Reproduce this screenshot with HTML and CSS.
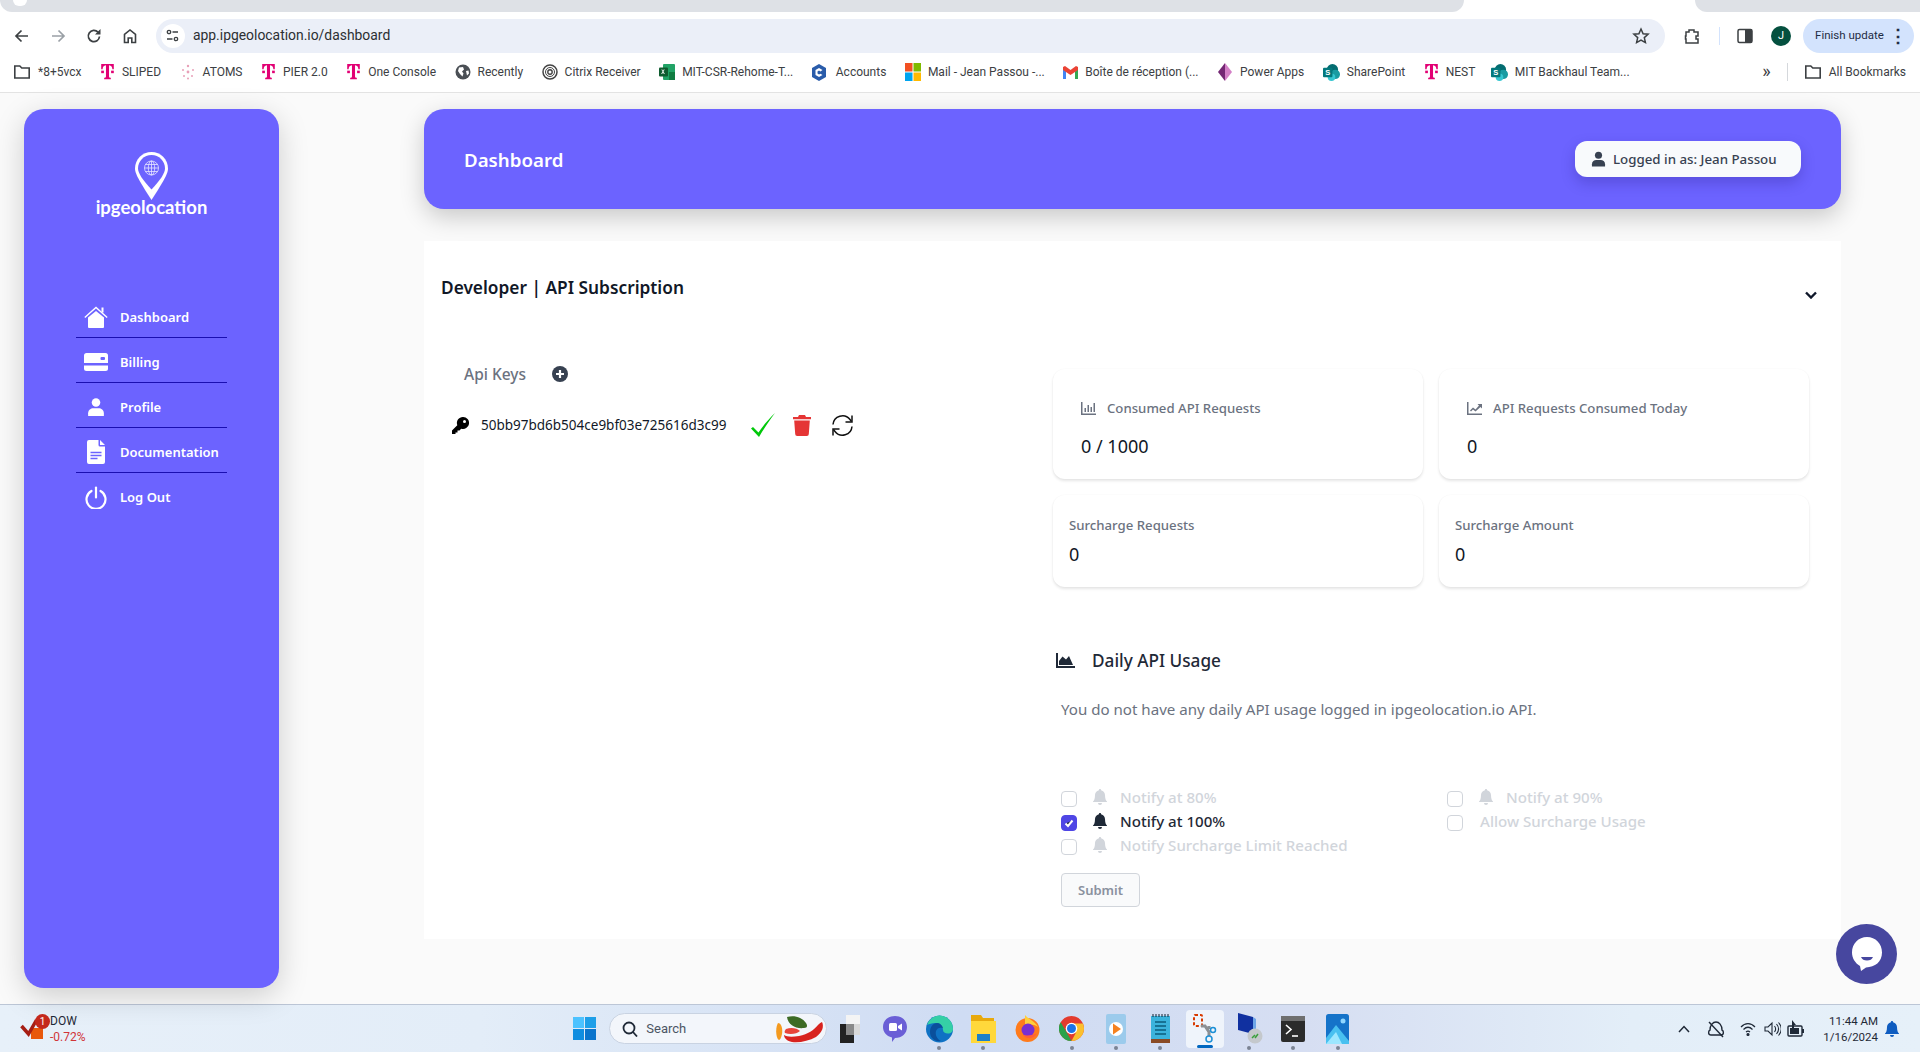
FILE: index.html
```html
<!DOCTYPE html>
<html lang="en">
<head>
    <meta charset="UTF-8">
    <meta name="viewport" content="width=device-width, initial-scale=1.0">
    <title>Dashboard</title>
    <link rel="stylesheet" href="styles.css">
</head>
<body>
    <svg class="defs" width="0" height="0">
        <symbol id="tmobile" viewBox="0 0 16 20"><path fill="#e20074" d="M1 1h14v6h-1.600c0-2.300-1-4.200-3.700-4.400v12.200c0 1.300.6 1.700 2 1.700v1.500H4.300v-1.500c1.400 0 2-.4 2-1.700V2.600C3.600 2.800 2.600 4.700 2.600 7H1z"/><rect fill="#e20074" x="1" y="8.500" width="3" height="2.800"/><rect fill="#e20074" x="12" y="8.500" width="3" height="2.800"/></symbol>
        <symbol id="folder" viewBox="0 0 18 16"><path fill="none" stroke="#3c4043" stroke-width="1.600" d="M1.800 2h5l2 2h7.400v10H1.800z"/></symbol>
        <symbol id="sharepoint" viewBox="0 0 18 18"><circle cx="10" cy="6" r="6" fill="#036c70"/><circle cx="13" cy="11" r="5" fill="#1a9ba1"/><circle cx="9" cy="14" r="4" fill="#37c6d0"/><rect y="4" width="10" height="10" rx="1" fill="#03787c"/></symbol>
        <symbol id="person" viewBox="0 0 16 16"><circle cx="8" cy="4" r="3.800"/><path d="M1 16v-2.500C1 10.500 3.500 9 5.500 9h5c2 0 4.500 1.500 4.500 4.500V16z"/></symbol>
        <symbol id="bell" viewBox="0 0 14 16"><path d="M7 0c.7 0 1.100.5 1.100 1.200C10.500 1.700 12 3.700 12 6c0 4 1 5.500 2 6.500V13H0v-.5C1 11.500 2 10 2 6c0-2.300 1.500-4.300 3.900-4.800C5.900.5 6.300 0 7 0z"/><path d="M5 14h4a2 2 0 0 1-4 0z"/></symbol>
    </svg>

    <div class="tabstrip">
        <div class="tab-rest tab-left"><span class="tab-dot"></span></div>
        <div class="tab-active"></div>
        <div class="tab-rest tab-right"></div>
    </div>

    <div class="toolbar">
        <button class="tool-btn"><svg width="16" height="16" viewBox="0 0 16 16" fill="none" stroke="#3c4043" stroke-width="1.700"><path d="M14 8H2.500M7.500 2.500 2 8l5.500 5.500"/></svg></button>
        <button class="tool-btn"><svg width="16" height="16" viewBox="0 0 16 16" fill="none" stroke="#9aa0a6" stroke-width="1.700"><path d="M2 8h11.500M8.500 2.500 14 8l-5.500 5.500"/></svg></button>
        <button class="tool-btn"><svg width="16" height="16" viewBox="0 0 16 16" fill="none" stroke="#3c4043" stroke-width="1.700"><path d="M13.500 8.500a5.600 5.600 0 1 1-1.500-4.300"/><path fill="#3c4043" stroke="none" d="M14.500 1v5.500H9z"/></svg></button>
        <button class="tool-btn"><svg width="16" height="16" viewBox="0 0 16 16" fill="none" stroke="#3c4043" stroke-width="1.600"><path d="M2.500 14.500V6.500L8 2l5.500 4.500v8h-3.700v-4.500H6.200v4.500z"/></svg></button>
        <div class="address">
            <span class="site-info"><svg width="13" height="13" viewBox="0 0 13 13" fill="none" stroke="#3c4043" stroke-width="1.300"><circle cx="3" cy="3" r="1.700"/><path d="M6.500 3H12M1 10h5.500"/><circle cx="10" cy="10" r="1.700"/></svg></span>
            <span class="url">app.ipgeolocation.io/dashboard</span>
            <svg class="star" width="18" height="18" viewBox="0 0 18 18" fill="none" stroke="#3c4043" stroke-width="1.500"><path d="m9 2 2.100 4.700 5 .5-3.800 3.400 1.100 5L9 13l-4.400 2.600 1.100-5L1.900 7.200l5-.5z"/></svg>
        </div>
        <div class="tool-right">
            <svg width="18" height="18" viewBox="0 0 18 18" fill="none" stroke="#3c4043" stroke-width="1.500"><path d="M3 5h3V3h5v2h4v4h-2v3h2v4H3v-4h-.5V9H3z"/></svg>
            <span class="tool-sep"></span>
            <svg width="16" height="16" viewBox="0 0 16 16"><rect x="1" y="1.500" width="14" height="13" rx="1.500" fill="none" stroke="#3c4043" stroke-width="1.500"/><rect x="8" y="1.500" width="7" height="13" fill="#3c4043"/></svg>
            <span class="avatar">J</span>
            <span class="finish"><span class="finish-text">Finish update</span> <span class="finish-dots">&#8942;</span></span>
        </div>
    </div>

    <div class="bookmarks">
        <span class="bm"><svg width="18" height="16"><use href="#folder"/></svg>*8+5vcx</span>
        <span class="bm"><svg width="15" height="18"><use href="#tmobile"/></svg>SLIPED</span>
        <span class="bm"><svg width="16" height="16" viewBox="0 0 16 16" fill="#e8a0b8"><circle cx="8" cy="2" r="1.200"/><circle cx="3" cy="6" r="1"/><circle cx="13" cy="6" r="1"/><circle cx="8" cy="8" r="1.400"/><circle cx="4" cy="12" r="1"/><circle cx="12" cy="12" r="1"/><circle cx="8" cy="14.500" r="1"/></svg>ATOMS</span>
        <span class="bm"><svg width="15" height="18"><use href="#tmobile"/></svg>PIER 2.0</span>
        <span class="bm"><svg width="15" height="18"><use href="#tmobile"/></svg>One Console</span>
        <span class="bm"><svg width="16" height="16" viewBox="0 0 16 16"><circle cx="8" cy="8" r="7.500" fill="#4a4f55"/><path fill="#fff" d="M4 3.500 8 3l1 2.500-2 2 1.500 2-1 3L5 10 3 7zM11 7l2.500-.5.500 3-2 2z"/></svg>Recently</span>
        <span class="bm"><svg width="16" height="16" viewBox="0 0 16 16" fill="none" stroke="#444"><circle cx="8" cy="8" r="7" stroke-width="1.500"/><circle cx="8" cy="8" r="4.500"/><circle cx="8" cy="8" r="2.200" stroke-width="1.400"/></svg>Citrix Receiver</span>
        <span class="bm"><svg width="16" height="16" viewBox="0 0 16 16"><rect x="4" y="0" width="12" height="16" rx="1" fill="#21a366"/><rect x="10" y="8" width="6" height="8" fill="#107c41"/><rect y="3.500" width="9" height="9" rx="1" fill="#0e5c2f"/><path d="m2.300 5.500 1.200 2-1.300 2.500h1l.8-1.700.8 1.700h1L4.500 7.500l1.200-2h-1L4 7l-.7-1.500z" fill="#fff"/></svg>MIT-CSR-Rehome-T...</span>
        <span class="bm bm-accounts"><svg width="14" height="17" viewBox="0 0 14 17"><path fill="#2a5caa" d="M7 0l7 4v9l-7 4-7-4V4z"/><path fill="#fff" d="M10.500 6 7 4 3.500 6v5L7 13l3.500-2-2-1.200L7 10.500 5.500 9.600V7.400L7 6.500l1.500.9z"/></svg>Accounts</span>
        <span class="bm"><svg width="16" height="18" viewBox="0 0 16 18"><rect width="7.500" height="8.500" fill="#f25022"/><rect x="8.500" width="7.500" height="8.500" fill="#7fba00"/><rect y="9.500" width="7.500" height="8.500" fill="#00a4ef"/><rect x="8.500" y="9.500" width="7.500" height="8.500" fill="#ffb900"/></svg>Mail - Jean Passou -...</span>
        <span class="bm"><svg width="15" height="13" viewBox="0 0 15 13"><path fill="#4285f4" d="M0 3v10h3V5z"/><path fill="#34a853" d="M12 5v8h3V3z"/><path fill="#ea4335" d="M0 1v3l7.500 5L15 4V1l-2-1-5.500 4L2 0z"/></svg>Boîte de réception (...</span>
        <span class="bm"><svg width="16" height="18" viewBox="0 0 16 18"><path fill="#742774" d="M8 0 1 9l7 9z"/><path fill="#d37fc6" d="m8 0 7 9-7 9z"/></svg>Power Apps</span>
        <span class="bm"><svg width="17" height="17" viewBox="0 0 18 18"><use href="#sharepoint"/><text x="5" y="12" class="sp-letter">S</text></svg>SharePoint</span>
        <span class="bm"><svg width="15" height="18"><use href="#tmobile"/></svg>NEST</span>
        <span class="bm bm-last"><svg width="17" height="17" viewBox="0 0 18 18"><use href="#sharepoint"/><text x="5" y="12" class="sp-letter">S</text></svg>MIT Backhaul Team...</span>
        <div class="bm-end">
            <span class="bm-more">&raquo;</span>
            <span class="bm-sep"></span>
            <span class="bm"><svg width="18" height="16"><use href="#folder"/></svg>All Bookmarks</span>
        </div>
    </div>

    <div class="page">
        <aside class="sidebar">
            <div class="logo">
                <svg width="33" height="48" viewBox="0 0 33 48">
                    <path fill="#fff" d="M16.500 0C25.600 0 33 7.400 33 16.500 33 22 28 30 16.500 48 5 30 0 22 0 16.500 0 7.400 7.400 0 16.500 0z"/>
                    <path fill="#6c63ff" d="M16.500 3C24 3 30 9 30 16.500c0 4.500-4.500 11.500-13.500 21-9-9.500-13.500-16.500-13.500-21C3 9 9 3 16.500 3z"/>
                    <g fill="none" stroke="#e6e4ff" stroke-width=".8"><circle cx="16.500" cy="16" r="7"/><ellipse cx="16.500" cy="16" rx="3.200" ry="7"/><path d="M9.500 16h14M10.500 12.500h12M10.500 19.500h12M16.500 9v14"/></g>
                </svg>
                <span class="logo-text">ipgeolocation</span>
            </div>
            <nav class="side-nav">
                <a class="nav-item"><span class="nav-icon"><svg width="24" height="22" viewBox="0 0 24 22" fill="#fff"><path d="M4 11.500 12 5l8 6.500V21a1 1 0 0 1-1 1H5a1 1 0 0 1-1-1z"/><path fill="none" stroke="#fff" stroke-width="1.400" d="M.8 11.500 12 1.500l11.200 10"/><rect x="17.500" y="1.500" width="2" height="5"/></svg></span>Dashboard</a>
                <a class="nav-item"><span class="nav-icon"><svg width="24" height="18" viewBox="0 0 24 18"><rect width="24" height="18" rx="2.500" fill="#fff"/><rect y="10" width="24" height="2.500" fill="#6c63ff"/><rect x="16.500" y="4" width="4.500" height="3" rx="1" fill="#6c63ff"/></svg></span>Billing</a>
                <a class="nav-item"><span class="nav-icon"><svg width="18" height="18" fill="#fff"><use href="#person"/></svg></span>Profile</a>
                <a class="nav-item"><span class="nav-icon"><svg width="18" height="24" viewBox="0 0 18 24"><path fill="#fff" d="M2 0h9.500v5a1.500 1.500 0 0 0 1.500 1.500h5V22a2 2 0 0 1-2 2H2a2 2 0 0 1-2-2V2a2 2 0 0 1 2-2zM13 0l5 5h-5z"/><path stroke="#6c63ff" stroke-width="1.400" d="M3.500 12.500h11M3.500 15.500h11M3.500 18.500h7"/></svg></span>Documentation</a>
                <a class="nav-item nav-last"><span class="nav-icon"><svg width="22" height="23" viewBox="0 0 22 23" fill="none" stroke="#fff" stroke-width="2.200" stroke-linecap="round"><path d="M6.500 5A9.500 9.500 0 1 0 15.500 5"/><path d="M11 1.500v10"/></svg></span>Log Out</a>
            </nav>
        </aside>

        <main class="main">
            <header class="top-header">
                <h1 class="top-title">Dashboard</h1>
                <button class="user-btn"><svg width="15" height="16" fill="#374151"><use href="#person"/></svg>Logged in as: Jean Passou</button>
            </header>

            <section class="panel">
                <div class="panel-head">
                    <h2 class="panel-title">Developer | API Subscription</h2>
                    <svg class="chevron" width="12" height="8" viewBox="0 0 12 8" fill="none" stroke="#0f172a" stroke-width="2.400"><path d="m1 1.500 5 5 5-5"/></svg>
                </div>
                <div class="panel-body">
                    <div class="keys">
                        <div class="keys-head">
                            <span class="keys-title">Api Keys</span>
                            <svg width="16" height="16" viewBox="0 0 16 16"><circle cx="8" cy="8" r="8" fill="#374151"/><path stroke="#fff" stroke-width="2.200" d="M8 4v8M4 8h8"/></svg>
                        </div>
                        <div class="key-row">
                            <svg width="17" height="17" viewBox="0 0 17 17"><path d="M11 0a6 6 0 1 1-1.800 11.700L7.500 13.500H5.500v2H3.500V17H0v-3.500l5.300-5.300A6 6 0 0 1 11 0z"/><circle cx="12.500" cy="4.500" r="1.500" fill="#fff"/></svg>
                            <span class="key-text">50bb97bd6b504ce9bf03e725616d3c99</span>
                            <svg class="key-check" width="24" height="24" viewBox="0 0 24 24"><path fill="#00c80a" d="M0 15.500 2 14l5.500 5.500C12 13 17.500 6 24 0 18 8 13 15.500 8 24z"/></svg>
                            <svg class="key-trash" width="18" height="21" viewBox="0 0 18 21" fill="#e53535"><path d="M6 0h6l1 2h5v2.200H0V2h5zM1.200 5.500h15.600L15.800 19a2 2 0 0 1-2 2H4.200a2 2 0 0 1-2-2z"/></svg>
                            <svg class="key-sync" width="23" height="23" viewBox="0 0 23 23" fill="none" stroke="#111" stroke-width="1.500"><path d="M2 10.500a9.500 9.500 0 0 1 17-5l1.500 2"/><path d="M21 12.500a9.500 9.500 0 0 1-17 5l-1.500-2"/><path d="M21 1.500V8h-6.500M2 21.500V15h6.500"/></svg>
                        </div>
                    </div>
                    <div class="usage">
                        <div class="stats">
                            <div class="stat stat-big">
                                <div class="stat-label"><svg width="15" height="13" viewBox="0 0 15 13" fill="#6b7280"><path d="M0 0h1.500v11.500H15V13H0z"/><path d="M3.500 6H5v4H3.500zM6.500 3H8v7H6.500zM9.500 5H11v5H9.500zM12.500 1H14v9h-1.500z"/></svg>Consumed API Requests</div>
                                <div class="stat-value">0 / 1000</div>
                            </div>
                            <div class="stat stat-big">
                                <div class="stat-label"><svg width="15" height="13" viewBox="0 0 15 13" fill="#6b7280"><path d="M0 0h1.500v11.500H15V13H0z"/><path d="m3 8.500 3-3 2.500 2L12 3.500 10.500 2H15v4.500L13.500 5l-5 4.500L6 7.500 4 9.500z"/></svg>API Requests Consumed Today</div>
                                <div class="stat-value">0</div>
                            </div>
                            <div class="stat">
                                <div class="stat-label">Surcharge Requests</div>
                                <div class="stat-value">0</div>
                            </div>
                            <div class="stat">
                                <div class="stat-label">Surcharge Amount</div>
                                <div class="stat-value">0</div>
                            </div>
                        </div>
                        <h3 class="daily-title"><svg width="19" height="15" viewBox="0 0 19 15" fill="#1f2937"><path d="M0 0h2v13h17v2H0z"/><path d="M3 12V8l3.500-4.500L10 6.500l3-3.500 4 9z"/></svg>Daily API Usage</h3>
                        <p class="daily-text">You do not have any daily API usage logged in ipgeolocation.io API.</p>
                        <div class="options">
                            <label class="opt off"><span class="check"></span><svg width="14" height="16"><use href="#bell"/></svg>Notify at 80%</label>
                            <label class="opt off"><span class="check"></span><svg width="14" height="16"><use href="#bell"/></svg>Notify at 90%</label>
                            <label class="opt"><span class="check checked"><svg width="12" height="12" viewBox="0 0 12 12" fill="none" stroke="#fff" stroke-width="2"><path d="m2.500 6.500 2.500 2.500 4.500-5.500"/></svg></span><svg width="14" height="16"><use href="#bell"/></svg>Notify at 100%</label>
                            <label class="opt off opt-plain"><span class="check"></span>Allow Surcharge Usage</label>
                            <label class="opt off"><span class="check"></span><svg width="14" height="16"><use href="#bell"/></svg>Notify Surcharge Limit Reached</label>
                        </div>
                        <button class="submit">Submit</button>
                    </div>
                </div>
            </section>
        </main>

        <button class="chat"><svg width="32" height="36" viewBox="0 0 32 36"><path fill="#fff" d="M16 1c8.500 0 15 6.500 15 15.500C31 26 24 31 15 31.500L10 35l-1-5C4 27 1 22 1 16.500 1 7.500 7.500 1 16 1z"/><path fill="#47479f" d="M10 21h12c-1 2.500-3 3.500-6 3.500S11 23.500 10 21z"/></svg></button>
    </div>

    <footer class="taskbar">
        <div class="widget">
            <span class="widget-icon">
                <svg width="26" height="26" viewBox="0 0 26 26"><rect x="11" y="14" width="12" height="11" fill="#e8590c"/><path fill="none" stroke="#a61e14" stroke-width="3.500" d="m1.500 12 7 8 8-14"/></svg>
                <span class="widget-badge">1</span>
            </span>
            <div class="widget-text"><span>DOW</span><span class="widget-down">-0.72%</span></div>
        </div>
        <div class="task-slot">
            <svg width="23" height="23" viewBox="0 0 23 23"><rect width="11" height="11" fill="#4cc2ff"/><rect x="12" width="11" height="11" fill="#1e9fe8"/><rect y="12" width="11" height="11" fill="#0f8de0"/><rect x="12" y="12" width="11" height="11" fill="#0a74cc"/></svg>
        </div>
        <div class="search">
            <svg width="16" height="16" viewBox="0 0 16 16" fill="none" stroke="#1f2937" stroke-width="1.800"><circle cx="7" cy="7" r="5.500"/><path d="m11 11 4 4.500"/></svg>
            <span class="search-text">Search</span>
            <svg class="chili" width="48" height="28" viewBox="0 0 48 28"><path fill="#f49a1f" d="M2 8c3 0 5 5 4 11-.5 3-2 6-3 6C0 24-1 13 2 8z"/><path fill="#3d6b25" d="M11 2c7-2 15 0 19 6 2 3 1 5-2 5-8 1-16-3-17-11z"/><path fill="#d8231f" d="M46 7c2 4 1 10-6 15-7 4-17 6-24 5-5-1-8-4-8-7 3 2 8 2 15 1 9-2 15-6 19-11 1-1 2-2 4-3z"/><path fill="#e8443a" d="M10 14c5-2 11-1 14 2-3 3-10 4-15 2-1-1 0-3 1-4z"/></svg>
        </div>
        <div class="task-slot"><svg width="20" height="28" viewBox="0 0 20 28"><rect x="6" width="14" height="20" fill="#d9d9d9"/><rect x="6" y="0" width="14" height="9" fill="#f4f4f4"/><rect y="9" width="14" height="19" fill="#222"/><rect x="6" y="9" width="8" height="11" fill="#8a8a8a"/></svg></div>
        <div class="task-slot"><svg width="24" height="26" viewBox="0 0 24 26"><path fill="#6a5fd6" d="M12 0c7 0 12 4.500 12 11s-5 11-12 11l-3 4v-4.500C3 20 0 16 0 11 0 4.500 5 0 12 0z"/><rect x="6" y="7" width="8" height="8" rx="1.500" fill="#fff"/><path fill="#fff" d="m15 10 4-2.500v7L15 12z"/></svg></div>
        <div class="task-slot running"><svg width="27" height="28" viewBox="0 0 27 28"><circle cx="13.500" cy="14" r="13.500" fill="#0f72c4"/><path fill="#35cfa6" d="M1 10C3 4 8 .5 13.500.5 21 .5 27 6.500 27 14c0 2.500-2 4.500-5 4.500-3 0-5-1.500-5-3.500 0-4-3-7-7.500-7C6 8 3 9 1 10z"/><path fill="#0a4f9c" d="M4 17c0-5 3-9 7-9 3 0 5 2 6 5-3-1-6 0-7 3-1 4 1 8 5 10-6 1-11-3-11-9z"/></svg></div>
        <div class="task-slot running"><svg width="25" height="28" viewBox="0 0 25 28"><path fill="#e8a90c" d="M0 0h10l2 3h11v6H0z"/><path fill="#ffd83b" d="M0 6h25v22H0z"/><rect x="6" y="19" width="13" height="7" fill="#1b80c9"/></svg></div>
        <div class="task-slot"><svg width="25" height="27" viewBox="0 0 25 27"><circle cx="12.500" cy="15" r="12" fill="#ff7b1c"/><path fill="#ffcf3b" d="M10 0c3 4 10 6 13 12-5-3-9-3-13-1z"/><circle cx="13" cy="15" r="6.500" fill="#7a2fd0"/><path fill="#ff5e3a" d="M8 20c4 5 11 4 14-2-3 2-9 3-14 2z"/></svg></div>
        <div class="task-slot running"><svg width="25" height="25" viewBox="0 0 25 25"><circle cx="12.500" cy="12.500" r="12.500" fill="#e33b2e"/><path fill="#2aa24a" d="M12.500 25A12.500 12.500 0 0 1 1.700 6.200L8 17z"/><path fill="#fbc02d" d="M12.500 25c7 0 12.500-5.600 12.500-12.500 0-1.800-.4-3.500-1-5H13l4 9z"/><circle cx="12.500" cy="12.500" r="5.800" fill="#fff"/><circle cx="12.500" cy="12.500" r="4.500" fill="#1a73e8"/></svg></div>
        <div class="task-slot running"><svg width="20" height="30" viewBox="0 0 20 30"><rect width="20" height="30" rx="2" fill="#9ccbec"/><circle cx="10" cy="15" r="7" fill="#fff"/><path fill="#f58220" d="M7 9.500 15 15l-8 5.500z"/></svg></div>
        <div class="task-slot running"><svg width="19" height="29" viewBox="0 0 19 29"><rect y="2" width="19" height="23" fill="#3bb3dc"/><path stroke="#123" d="M2 0v3M5 0v3M8 0v3M11 0v3M14 0v3M17 0v3"/><path stroke="#0d5d7c" stroke-width="1.500" d="M4 8h11M4 12h11M4 16h11M4 20h11"/><rect y="25" width="19" height="4" fill="#8a4b25"/></svg></div>
        <div class="task-slot slot-active"><svg width="24" height="30" viewBox="0 0 24 30" fill="none"><rect x="1" y="1" width="8" height="11" rx="1" stroke="#d83b01" stroke-width="2" stroke-dasharray="3 2"/><path stroke="#8b8f94" stroke-width="3" d="M8 12h4l4 6v4M16 15v-3"/><circle cx="16" cy="25" r="3" stroke="#1b8fd6" stroke-width="1.500"/><circle cx="20" cy="16" r="2.500" stroke="#1b8fd6" stroke-width="1.500"/></svg><span class="active-bar"></span></div>
        <div class="task-slot running"><svg width="27" height="31" viewBox="0 0 27 31"><path fill="#1030a0" d="M2 0l15 4v17L2 17z"/><path fill="#6ea5e8" d="M17 4l3 2v15h-3z"/><circle cx="19" cy="23" r="7.500" fill="#c4c8cc"/><path stroke="#3aa03c" stroke-width="1.500" fill="none" d="m16 25 3-3m0 3 3-4"/></svg></div>
        <div class="task-slot running"><svg width="24" height="26" viewBox="0 0 24 26"><rect width="24" height="26" rx="2" fill="#2b2b2b"/><rect width="24" height="5" fill="#6f6f6f"/><path stroke="#fff" stroke-width="1.600" fill="none" d="m5 9 5 4.500L5 18"/><path stroke="#fff" stroke-width="1.600" d="M11 20h6"/></svg></div>
        <div class="task-slot running"><svg width="23" height="30" viewBox="0 0 23 30"><rect width="23" height="30" rx="2.500" fill="#1573c9"/><circle cx="17" cy="7" r="2.500" fill="#8fd6ff"/><path fill="#49c0f0" d="M0 30V24L10 11l13 16v3z"/><path fill="#9de7ff" d="M0 30 10 18l6 12z"/></svg></div>

        <div class="tray">
            <svg width="12" height="8" viewBox="0 0 12 8" fill="none" stroke="#1f2937" stroke-width="1.500"><path d="m1 7 5-5.500L11 7"/></svg>
            <svg class="tray-cloud" width="18" height="18" viewBox="0 0 18 18" fill="none" stroke="#1f2937" stroke-width="1.400"><path d="M4 15c-3 0-3-4-1-5 0-5 3-8 6-8s6 3 6 8c2 1 2 5-1 5z"/><path d="m2 2 14 15"/></svg>
            <svg class="tray-wifi" width="16" height="16" viewBox="0 0 16 16" fill="none" stroke="#1f2937" stroke-width="1.200"><path d="M1 6c4-4.500 10-4.500 14 0M3.500 8.500c3-3 6-3 9 0M6 11c1.500-1.200 2.500-1.200 4 0"/><circle cx="8" cy="13.500" r="1" fill="#1f2937"/></svg>
            <svg class="tray-vol" width="17" height="18" viewBox="0 0 17 18" fill="none" stroke="#1f2937" stroke-width="1.100"><path d="M1 7v4h3l4 4V3L4 7zM10.500 6c1.500 2 1.500 4 0 6M12.500 4c2.500 3 2.500 7 0 10M14.500 2.500c3.500 4 3.500 9 0 13"/></svg>
            <svg class="tray-bat" width="18" height="18" viewBox="0 0 18 18"><rect x="1" y="6" width="14" height="10" rx="1" fill="none" stroke="#1f2937" stroke-width="1.400"/><rect x="3" y="8" width="9" height="6" fill="#1f2937"/><rect x="15" y="9" width="2" height="4" fill="#1f2937"/><path fill="#1f2937" d="M5 0v8h2V5h2z"/></svg>
            <div class="clock"><span>11:44 AM</span><span>1/16/2024</span></div>
            <svg class="tray-bell" width="14" height="18" viewBox="0 0 14 16" fill="#0f5cc0"><use href="#bell"/></svg>
        </div>
    </footer>
</body>
</html>
```

FILE: styles.css
```css
* {
    box-sizing: border-box;
}
html, body {
    margin: 0;
    height: 1052px;
    overflow: hidden;
}
body {
    display: flex;
    flex-direction: column;
    width: 1920px;
    font-family: "Noto Sans", "Open Sans", Arial, sans-serif;
    color: #111827;
    background: #fff;
}
button {
    font-family: inherit;
    border: none;
    background: none;
    padding: 0;
}
svg {
    flex: none;
    display: block;
}
.defs {
    position: absolute;
}
.sp-letter {
    font: 700 8px "Liberation Sans", sans-serif;
    fill: #fff;
    text-anchor: middle;
}

/* browser chrome */
.tabstrip {
    display: flex;
    height: 12px;
    flex: none;
    background: #fff;
}
.tab-rest {
    background: #dee1e6;
    border-radius: 0 0 12px 12px;
    overflow: hidden;
}
.tab-left {
    width: 1464px;
    padding-left: 13px;
}
.tab-active {
    width: 231px;
}
.tab-right {
    flex: 1;
    border-bottom-right-radius: 0;
}
.tab-dot {
    display: block;
    width: 14px;
    height: 6px;
    background: #fff;
    border-radius: 0 0 7px 7px;
}
.toolbar {
    display: flex;
    align-items: center;
    flex: none;
    height: 41px;
    padding: 6px 6px 0 0;
    background: #fff;
}
.tool-btn {
    display: flex;
    justify-content: center;
    width: 36px;
}
.tool-btn:first-child {
    margin-left: 4px;
}
.address {
    display: flex;
    align-items: center;
    width: 1510px;
    height: 34px;
    margin-left: 8px;
    padding: 0 15px 0 5px;
    border-radius: 17px;
    background: #ebeff8;
}
.site-info {
    display: flex;
    align-items: center;
    justify-content: center;
    width: 24px;
    height: 24px;
    border-radius: 50%;
    background: #fff;
}
.url {
    margin: -2px 0 0 8px;
    font: 13.900px Roboto, sans-serif;
    color: #2c2f33;
}
.star {
    margin-left: auto;
}
.tool-right {
    display: flex;
    align-items: center;
    flex: 1;
    padding-left: 18px;
}
.tool-sep {
    width: 1px;
    height: 18px;
    margin: 0 17px 0 18px;
    background: #d3e3fd;
}
.avatar {
    width: 20px;
    height: 20px;
    margin-left: 18px;
    border-radius: 50%;
    background: #04503f;
    color: #fff;
    font: 11px/20px Roboto, sans-serif;
    text-align: center;
}
.finish {
    display: flex;
    align-items: center;
    justify-content: space-between;
    width: 111px;
    height: 34px;
    margin-left: 12px;
    padding: 0 7px 0 12px;
    border-radius: 17px;
    background: #d3e3fd;
    color: #1f2c44;
    font: 11.500px Roboto, sans-serif;
}
.finish-text {
    margin-top: -2px;
}
.finish-dots {
    font-size: 18px;
    font-weight: 700;
}
.bookmarks {
    display: flex;
    align-items: center;
    flex: none;
    gap: 18.500px;
    height: 40px;
    padding: 0 14px 1px 13px;
    background: #fff;
    border-bottom: 1px solid #e3e3e3;
}
.bm {
    display: flex;
    align-items: center;
    gap: 7px;
    color: #3c4043;
    font: 12px Roboto, sans-serif;
    white-space: nowrap;
}
.bm-accounts {
    gap: 10px;
}
.bm-last {
    margin-left: -3px;
}
.bm-end {
    display: flex;
    align-items: center;
    margin-left: auto;
}
.bm-more {
    font: 18px Roboto, sans-serif;
    color: #3c4043;
    margin-top: -3px;
}
.bm-sep {
    width: 1px;
    height: 18px;
    margin: 0 16px;
    background: #d5d8dc;
}

/* page */
.page {
    position: relative;
    display: flex;
    flex: 1;
    padding: 16px 0 16px 24px;
    background: #fafafa;
}
.sidebar {
    width: 255px;
    padding-top: 43px;
    border-radius: 20px;
    background: #6c63ff;
    box-shadow: 0 8px 30px rgba(0, 0, 0, .18);
}
.logo {
    display: flex;
    flex-direction: column;
    align-items: center;
    height: 97px;
    margin-bottom: 44px;
}
.logo-text {
    margin-top: -4px;
    color: #fff;
    font: 700 18.500px/22px Lato, sans-serif;
}
.side-nav {
    margin: 0 52px;
}
.nav-item {
    display: flex;
    align-items: center;
    height: 45px;
    padding: 3px 0 0 8px;
    border-bottom: 1px solid #1a0fb0;
    color: #fff;
    font-size: 13px;
    font-weight: 600;
}
.nav-last {
    border-bottom: none;
}
.nav-icon {
    display: flex;
    align-items: center;
    justify-content: center;
    width: 24px;
    margin-right: 12px;
}
.main {
    width: 1417px;
    margin-left: 145px;
}
.top-header {
    display: flex;
    align-items: center;
    justify-content: space-between;
    height: 100px;
    margin-bottom: 32px;
    padding: 0 40px;
    border-radius: 20px;
    background: #6c63ff;
    box-shadow: 0 8px 24px rgba(0, 0, 0, .2);
}
.top-title {
    margin: 0;
    color: #fff;
    font-size: 18.700px;
    font-weight: 600;
}
.user-btn {
    display: flex;
    align-items: center;
    gap: 7px;
    width: 226px;
    height: 36px;
    padding-left: 16px;
    border-radius: 12px;
    background: #f8fafc;
    color: #374151;
    font-size: 13.300px;
    font-weight: 500;
    box-shadow: 0 6px 14px rgba(30, 20, 120, .25);
}
.panel {
    height: 698px;
    padding: 32px 24px 0 17px;
    background: #fff;
}
.panel-head {
    display: flex;
    justify-content: space-between;
    align-items: flex-start;
    margin-bottom: 59px;
}
.panel-title {
    margin: 0;
    font-size: 17.300px;
    line-height: 30px;
    font-weight: 600;
    color: #111827;
}
.chevron {
    margin-top: 18px;
}
.panel-body {
    display: flex;
}
.keys {
    width: 612px;
}
.keys-head {
    display: flex;
    align-items: center;
    gap: 26px;
    height: 24px;
    padding-left: 23px;
}
.keys-title {
    color: #6b7280;
    font-size: 15.500px;
    font-weight: 500;
}
.key-row {
    display: flex;
    align-items: center;
    height: 30px;
    margin-top: 24px;
    padding-left: 11px;
}
.key-text {
    width: 270px;
    margin-left: 12px;
    font-size: 13.500px;
    white-space: nowrap;
}
.key-trash {
    margin-left: 18px;
}
.key-sync {
    margin-left: 20px;
}
.usage {
    width: 756px;
    padding-top: 7px;
}
.stats {
    display: grid;
    grid-template-columns: 370px 370px;
    grid-template-rows: 110px 92px;
    gap: 16px;
}
.stat {
    padding: 20px 16px 0;
    border-radius: 12px;
    background: #fff;
    box-shadow: 0 2px 3px rgba(0, 0, 0, .1), 0 0 2px rgba(0, 0, 0, .04);
}
.stat-big {
    padding: 29px 28px 0;
}
.stat-label {
    display: flex;
    align-items: center;
    gap: 11px;
    height: 20px;
    color: #6b7280;
    font-size: 13.200px;
    font-weight: 500;
}
.stat-value {
    margin-top: 5px;
    font-size: 18px;
    line-height: 28px;
    color: #111827;
}
.stat-big .stat-value {
    margin-top: 14px;
}
.daily-title {
    display: flex;
    align-items: center;
    gap: 17px;
    height: 28px;
    margin: 59px 0 0 3px;
    font-size: 17.200px;
    font-weight: 500;
    color: #1f2937;
}
.daily-text {
    margin: 23px 0 0 8px;
    color: #6b7280;
    font-size: 15.100px;
    line-height: 24px;
}
.options {
    display: grid;
    grid-template-columns: 386px 1fr;
    grid-auto-rows: 24px;
    margin: 64px 0 0 8px;
}
.opt {
    display: flex;
    align-items: center;
    gap: 13px;
    color: #1f2937;
    font-size: 15.100px;
    font-weight: 500;
    white-space: nowrap;
}
.opt svg {
    fill: #1f2937;
}
.opt.off {
    color: #d1d5db;
}
.opt.off svg {
    fill: #d1d5db;
}
.check {
    display: flex;
    align-items: center;
    justify-content: center;
    flex: none;
    width: 16px;
    height: 16px;
    margin-top: 3px;
    margin-right: 3px;
    border: 1px solid #d1d5db;
    border-radius: 4px;
    background: #fff;
}
.check.checked {
    border-color: #4f46e5;
    background: #4f46e5;
}
.opt-plain {
    gap: 14px;
}
.submit {
    display: block;
    width: 79px;
    height: 34px;
    margin: 16px 0 0 8px;
    border: 1px solid #d1d5db;
    border-radius: 4px;
    background: #f9fafb;
    color: #8a919e;
    font-size: 13px;
    font-weight: 600;
}
.chat {
    position: absolute;
    right: 23px;
    top: 831px;
    display: flex;
    align-items: center;
    justify-content: center;
    width: 61px;
    height: 60px;
    border-radius: 50%;
    background: #47479f;
}

/* windows taskbar */
.taskbar {
    display: flex;
    align-items: center;
    flex: none;
    height: 48px;
    border-top: 1px solid #bcc6d6;
    background: linear-gradient(90deg, #e7f0f9 0%, #e3edf8 25%, #cfdcf3 50%, #d6def2 68%, #e3eef8 85%, #e6f0f9 100%);
}
.widget {
    display: flex;
    align-items: center;
    gap: 2px;
    width: 562px;
    padding-left: 20px;
}
.widget-icon {
    position: relative;
    display: block;
    width: 28px;
    height: 30px;
}
.widget-badge {
    position: absolute;
    top: 0;
    right: -2px;
    width: 15px;
    height: 15px;
    border-radius: 50%;
    background: #c4281c;
    color: #fff;
    font: 10px/15px Roboto, sans-serif;
    text-align: center;
}
.widget-text {
    display: flex;
    flex-direction: column;
    gap: 2px;
    color: #1f2937;
    font: 12px/14px Roboto, sans-serif;
}
.widget-down {
    color: #d13438;
}
.task-slot {
    position: relative;
    display: flex;
    align-items: center;
    justify-content: center;
    flex: none;
    width: 44.300px;
    height: 46px;
}
.task-slot.running::after {
    content: "";
    position: absolute;
    bottom: 2px;
    left: 20px;
    width: 4px;
    height: 4px;
    border-radius: 50%;
    background: #7b8494;
}
.slot-active {
    height: 38px;
    width: 38px;
    margin: 0 3.150px;
    border-radius: 4px;
    background: #eff4fb;
}
.active-bar {
    position: absolute;
    bottom: 0;
    left: 11px;
    width: 16px;
    height: 3px;
    border-radius: 2px;
    background: #0067c0;
}
.search {
    display: flex;
    align-items: center;
    width: 218px;
    height: 31px;
    margin-left: 3px;
    margin-right: 1px;
    padding: 0 2px 0 12px;
    border: 1px solid #c9d3e2;
    border-radius: 16px;
    background: #f3f6fb;
}
.search-text {
    margin-left: 8px;
    color: #4b5563;
    font: 13px Roboto, sans-serif;
}
.chili {
    margin-left: auto;
}
.tray {
    display: flex;
    align-items: center;
    margin-left: auto;
    padding-right: 21px;
}
.tray-cloud {
    margin-left: 17px;
}
.tray-wifi {
    margin-left: 15px;
}
.tray-vol {
    margin-left: 8px;
}
.tray-bat {
    margin-left: 6px;
}
.clock {
    display: flex;
    flex-direction: column;
    align-items: flex-end;
    gap: 2px;
    margin-left: 18px;
    color: #1f2937;
    font: 11.500px/14px Roboto, sans-serif;
}
.tray-bell {
    margin-left: 7px;
}
```
